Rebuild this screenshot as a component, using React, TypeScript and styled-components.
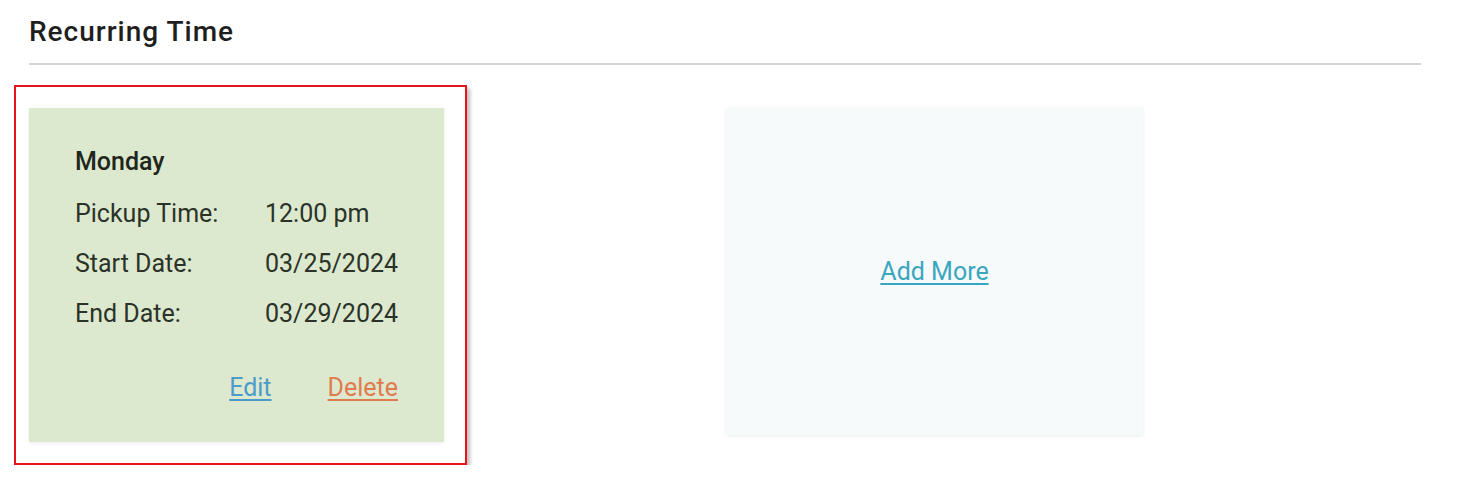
import React from "react";
import styled, { createGlobalStyle } from "styled-components";

const Global = createGlobalStyle`
  html, body { margin: 0; padding: 0; background: #ffffff; }
  body { font-family: Roboto, "Noto Sans", Arial, sans-serif; color: #222; }
`;

const Page = styled.div`
  padding: 14px 58px 0 29px;
`;

const Title = styled.h2`
  margin: 0;
  font-size: 28px;
  font-weight: 500;
  letter-spacing: 1px;
  line-height: 36px;
  color: #1e1e1e;
  padding-bottom: 13px;
  border-bottom: 2px solid #d4d4d4;
`;

const CardRow = styled.div`
  display: flex;
  align-items: flex-start;
  margin-top: 20px;
`;

const Highlight = styled.div`
  margin-left: -15px;
  padding: 21px 21px 21px 13px;
  border: 2px solid #e8141b;
  box-shadow: 3px 3px 4px rgba(0, 0, 0, 0.25);
`;

const Card = styled.div<{ $bg: string }>`
  box-sizing: border-box;
  width: 415px;
  height: 334px;
  background: ${(p) => p.$bg};
  box-shadow: 0 1px 4px rgba(0, 0, 0, 0.08);
`;

const InfoCard = styled(Card)`
  padding: 37px 46px 0 46px;
`;

const AddCard = styled(Card)`
  width: 417px;
  height: 327px;
  margin-left: 259px;
  margin-top: 23px;
  display: flex;
  align-items: center;
  justify-content: center;
`;

const Day = styled.div`
  font-size: 25px;
  font-weight: 500;
  line-height: 34px;
  color: #1f261c;
`;

const Details = styled.div`
  display: grid;
  grid-template-columns: 190px auto;
  font-size: 25px;
  line-height: 50px;
  color: #2b3328;
  margin-top: 10px;
`;

const Actions = styled.div`
  display: flex;
  justify-content: flex-end;
  gap: 56px;
  margin-top: 34px;
`;

const LinkText = styled.a<{ $color: string }>`
  font-size: 25px;
  line-height: 30px;
  color: ${(p) => p.$color};
  text-decoration: underline;
  text-underline-offset: 3px;
  cursor: pointer;
`;

const rows: [string, string][] = [
  ["Pickup Time:", "12:00 pm"],
  ["Start Date:", "03/25/2024"],
  ["End Date:", "03/29/2024"],
];

export default function App() {
  return (
    <>
      <Global />
      <Page>
        <Title>Recurring Time</Title>
        <CardRow>
          <Highlight>
            <InfoCard $bg="#dde9cf">
              <Day>Monday</Day>
              <Details>
                {rows.map(([k, v]) => (
                  <React.Fragment key={k}>
                    <span>{k}</span>
                    <span>{v}</span>
                  </React.Fragment>
                ))}
              </Details>
              <Actions>
                <LinkText $color="#4b9ccb">Edit</LinkText>
                <LinkText $color="#e07b4f">Delete</LinkText>
              </Actions>
            </InfoCard>
          </Highlight>
          <AddCard $bg="#f6fafa">
            <LinkText $color="#3aa6c0">Add More</LinkText>
          </AddCard>
        </CardRow>
      </Page>
    </>
  );
}
